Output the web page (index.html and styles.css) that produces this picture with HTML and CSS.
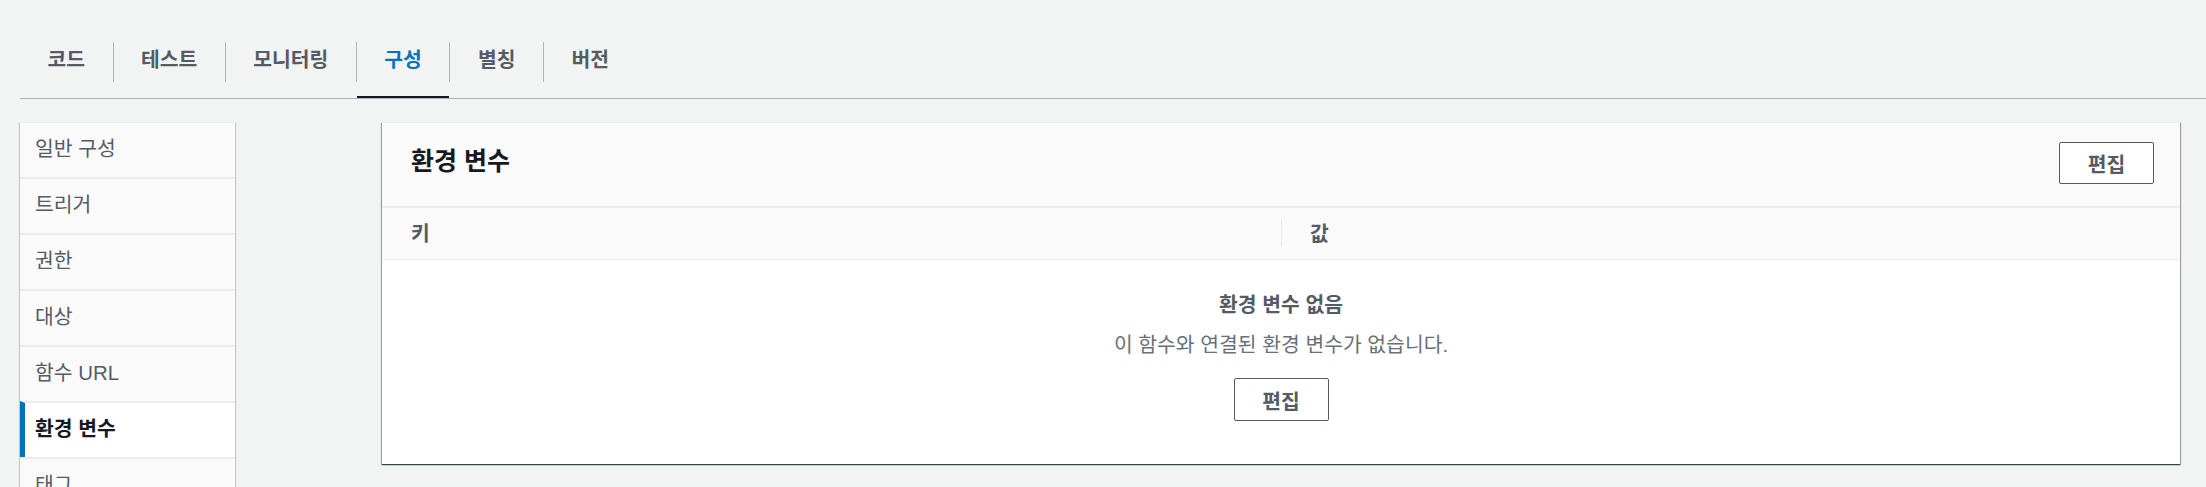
FILE: index.html
```html
<!DOCTYPE html>
<html lang="ko">
<head>
<meta charset="utf-8">
<title>구성 - 환경 변수</title>
<link rel="stylesheet" href="styles.css">
</head>
<body>
  <nav class="tabs">
    <a class="tab">코드</a>
    <span class="sep"></span>
    <a class="tab">테스트</a>
    <span class="sep"></span>
    <a class="tab">모니터링</a>
    <span class="sep"></span>
    <a class="tab active">구성</a>
    <span class="sep"></span>
    <a class="tab">별칭</a>
    <span class="sep"></span>
    <a class="tab">버전</a>
  </nav>

  <div class="layout">
    <ul class="side-nav">
      <li class="nav-item">일반 구성</li>
      <li class="nav-item">트리거</li>
      <li class="nav-item">권한</li>
      <li class="nav-item">대상</li>
      <li class="nav-item">함수 URL</li>
      <li class="nav-item active">환경 변수</li>
      <li class="nav-item">태그</li>
    </ul>

    <section class="panel">
      <header class="panel-header">
        <h2 class="panel-title">환경 변수</h2>
        <button class="btn">편집</button>
      </header>
      <div class="table-head">
        <div class="col">키</div>
        <div class="col">값</div>
      </div>
      <div class="empty">
        <div class="empty-title">환경 변수 없음</div>
        <div class="empty-text">이 함수와 연결된 환경 변수가 없습니다.</div>
        <button class="btn btn-empty">편집</button>
      </div>
    </section>
  </div>
</body>
</html>
```

FILE: styles.css
```css
html, body {
  margin: 0;
  padding: 0;
  overflow: hidden;
}

body {
  background: #f2f3f3;
  font-family: "Liberation Sans", "Noto Sans CJK KR", sans-serif;
  font-size: 20.4px;
  color: #16191f;
}

/* ---------- Tabs ---------- */
.tabs {
  display: flex;
  align-items: center;
  margin-left: 20px;
  padding-top: 25px;
  border-bottom: 1px solid #aab7b8;
}

.tab {
  box-sizing: border-box;
  height: 73px;
  display: flex;
  align-items: center;
  padding: 0 27.5px 5px;
  border-bottom: 2px solid transparent;
  font-weight: 700;
  color: #545b64;
  cursor: pointer;
}

.tab.active {
  color: #0073bb;
  border-bottom-color: #16191f;
}

.sep {
  width: 1px;
  height: 40px;
  background: #aab7b8;
}

/* ---------- Layout ---------- */
.layout {
  display: flex;
  align-items: flex-start;
  gap: 147px;
  padding: 23px 26px 0 20px;
}

/* ---------- Side navigation ---------- */
.side-nav {
  list-style: none;
  margin: 0;
  padding: 0;
  width: 215px;
  flex: none;
  background: #fafafa;
  border-top: 1px solid #eaeded;
  box-shadow: 0 1px 1px 0 rgba(0, 28, 36, 0.3), 1px 1px 1px 0 rgba(0, 28, 36, 0.15), -1px 1px 1px 0 rgba(0, 28, 36, 0.15);
}

.nav-item {
  box-sizing: border-box;
  height: 54px;
  display: flex;
  align-items: center;
  padding: 0 0 6px 15px;
  color: #545b64;
}

.nav-item + .nav-item {
  border-top: 2px solid #eaeded;
  height: 56px;
}

.nav-item.active {
  background: #fff;
  border-left: 5px solid #0073bb;
  padding-left: 10px;
  font-weight: 700;
  color: #16191f;
}

/* ---------- Panel ---------- */
.panel {
  flex: 1;
  background: #fff;
  border-top: 1px solid #eaeded;
  box-shadow: 0 1px 1px 0 rgba(0, 28, 36, 0.6), 1px 1px 1px 0 rgba(0, 28, 36, 0.3), -1px 1px 1px 0 rgba(0, 28, 36, 0.3);
}

.panel-header {
  box-sizing: border-box;
  height: 85px;
  display: flex;
  align-items: center;
  justify-content: space-between;
  padding: 0 26px 3px 29px;
  background: #fafafa;
  border-bottom: 2px solid #eaeded;
}

.panel-title {
  margin: 0 0 8px;
  font-size: 25px;
  font-weight: 700;
  color: #16191f;
}

.btn {
  box-sizing: border-box;
  width: 95px;
  height: 42px;
  background: #fff;
  border: 1px solid #545b64;
  border-radius: 2px;
  font-family: inherit;
  font-size: 20.4px;
  font-weight: 700;
  color: #545b64;
  padding: 0;
  cursor: pointer;
}

.table-head {
  display: grid;
  grid-template-columns: 1fr 1fr;
  height: 51px;
  background: #fafafa;
  border-bottom: 1px solid #eaeded;
}

.col {
  display: flex;
  align-items: center;
  padding-left: 29px;
  padding-bottom: 3px;
  font-weight: 700;
  color: #545b64;
}

.col + .col {
  padding-left: 0;
}

.col + .col::before {
  content: "";
  width: 1px;
  height: 27px;
  margin-right: 28px;
  background: #e9ebed;
}

.empty {
  display: flex;
  flex-direction: column;
  align-items: center;
  padding: 31px 0 43px;
}

.empty-title {
  line-height: 28px;
  font-weight: 700;
  color: #545b64;
}

.empty-text {
  margin-top: 12px;
  line-height: 28px;
  color: #687078;
}

.btn-empty {
  margin-top: 19px;
  height: 43px;
}
```
